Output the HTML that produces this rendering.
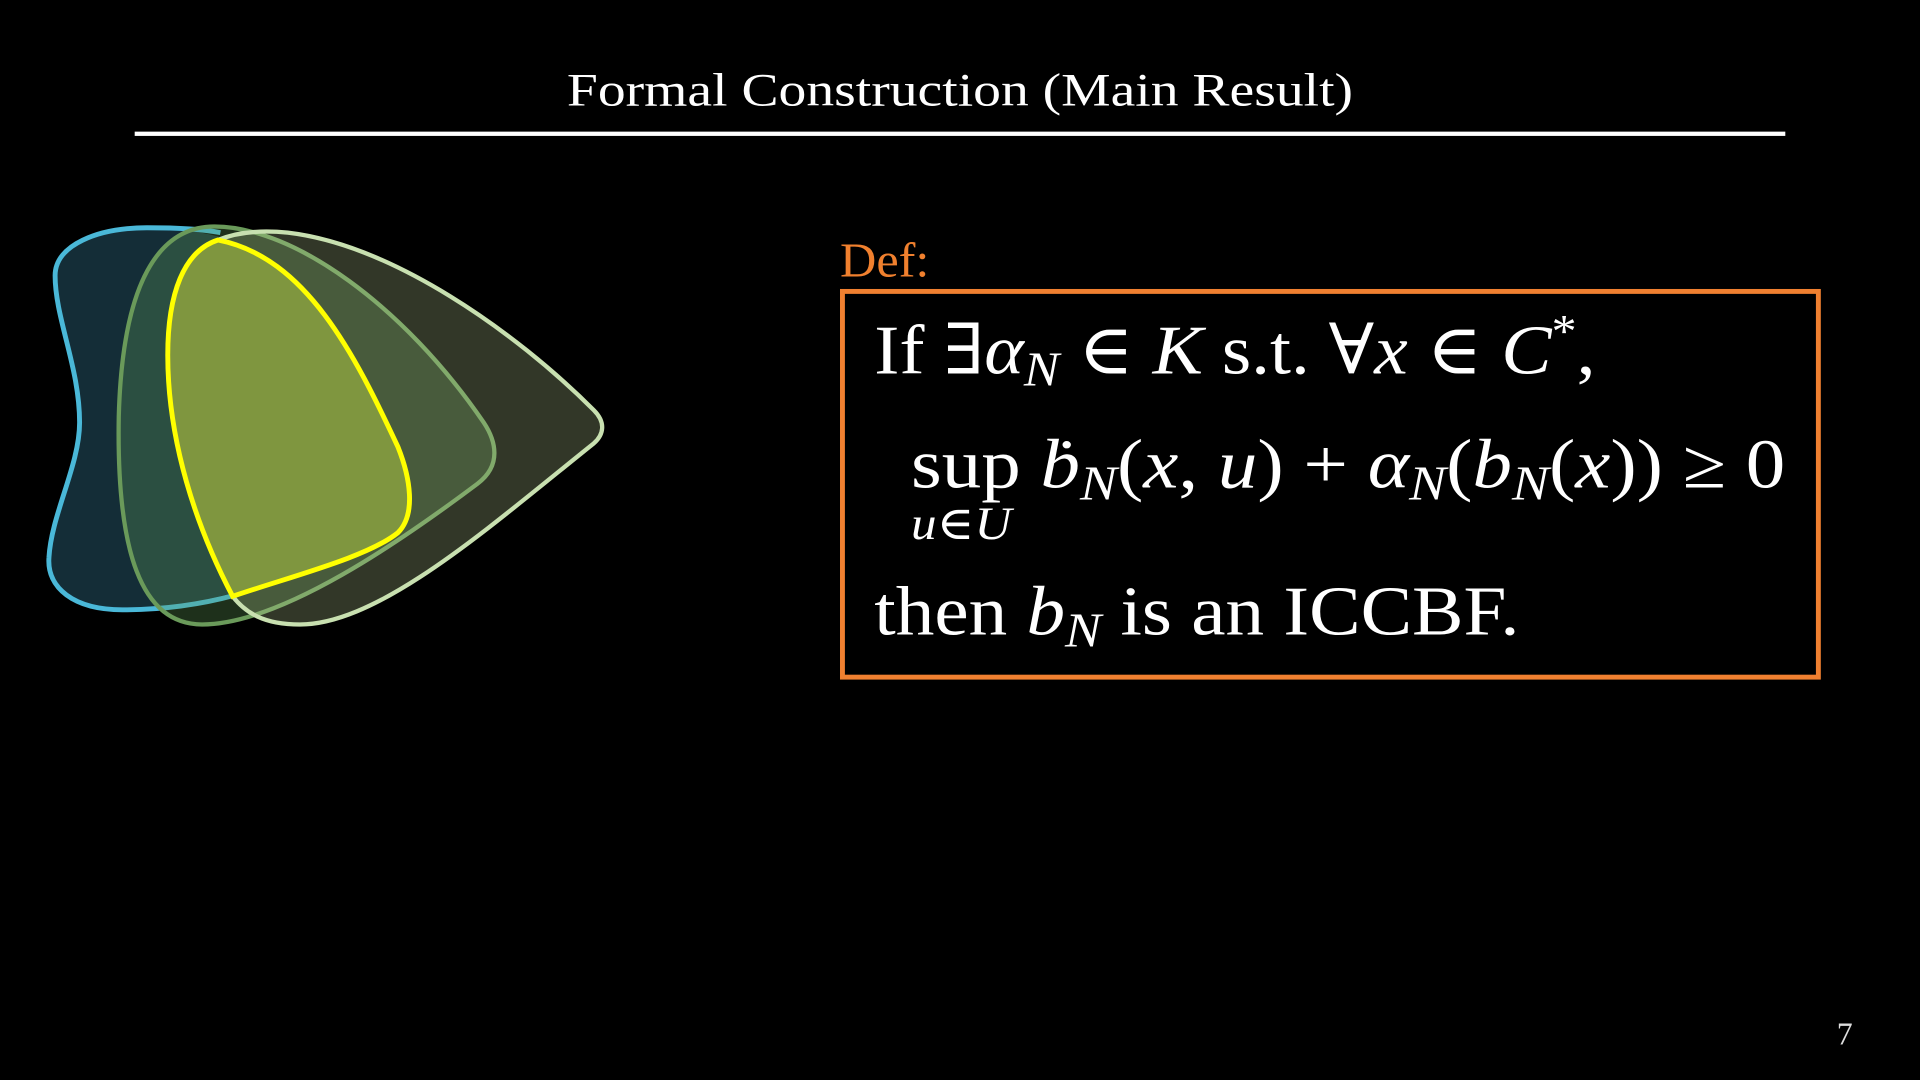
<!DOCTYPE html>
<html><head><meta charset="utf-8"><style>
html,body{margin:0;padding:0;background:#000;width:1920px;height:1080px;overflow:hidden}
svg{display:block}
text{font-family:"Liberation Serif","DejaVu Serif",serif;fill:#fff}
.i{font-style:italic}
</style></head><body>
<svg width="1920" height="1080" viewBox="0 0 1568 882" xmlns="http://www.w3.org/2000/svg">
<rect width="1568" height="882" fill="#000"/>
<text x="784" y="86" font-size="38" text-anchor="middle" textLength="642" lengthAdjust="spacingAndGlyphs">Formal Construction (Main Result)</text>
<rect x="110" y="107.5" width="1348" height="3.5" fill="#fff"/>

<path d="M120 186 C160 186 190 195 210 205 L230 470 C190 487 140 498 100 498 C60 498 38 480 40 455 C42 420 65 380 65 345 C65 300 45 260 45 225 C45 200 80 186 120 186 Z" fill="rgba(80,180,220,0.25)"/>
<path d="M180 190 C165 187 140 186 120 186 C80 186 45 200 45 225 C45 260 65 300 65 345 C65 380 42 420 40 455 C38 480 60 498 100 498 C140 498 170 492 192 486" fill="none" stroke="#4ab8d8" stroke-width="4"/>
<path d="M175 185 C130 185 100 230 97 340 C95 450 115 510 165 510 C230 510 330 440 390 395 C410 380 405 360 395 345 C330 250 240 185 175 185 Z" fill="rgba(100,160,90,0.3)" stroke="#6a9a5a" stroke-width="3.5"/>
<path d="M178 196 C195 189 215 188 235 190 C320 200 420 270 485 335 C495 345 493 355 485 362 C400 430 310 510 245 510 C215 510 200 500 190 487 Z" fill="rgba(200,220,160,0.25)" stroke="#c8e0b0" stroke-width="3.5"/>
<path d="M178 196 C150 205 137 240 137 290 C137 360 160 430 190 487 C240 470 300 455 325 435 C340 420 335 390 325 365 C290 290 250 210 178 196 Z" fill="#7f963f" stroke="#ffff00" stroke-width="4"/>

<text x="686" y="226" font-size="40" style="fill:#f0802e" textLength="73" lengthAdjust="spacingAndGlyphs">Def:</text>
<rect x="688" y="238" width="797" height="315" fill="none" stroke="#f08030" stroke-width="4"/>

<text x="714" y="305" font-size="57" textLength="589" lengthAdjust="spacingAndGlyphs">If ∃<tspan class="i">α</tspan><tspan class="i" font-size="40" dy="10">N</tspan><tspan dy="-10"> ∈ </tspan><tspan class="i">K</tspan> s.t. ∀<tspan class="i">x</tspan> ∈ <tspan class="i">C</tspan><tspan font-size="38" dy="-22">*</tspan><tspan dy="22">,</tspan></text>

<text x="744" y="398" font-size="57" textLength="714" lengthAdjust="spacingAndGlyphs">sup <tspan class="i">ḃ</tspan><tspan class="i" font-size="40" dy="10">N</tspan><tspan dy="-10">(</tspan><tspan class="i">x</tspan>, <tspan class="i">u</tspan>) + <tspan class="i">α</tspan><tspan class="i" font-size="40" dy="10">N</tspan><tspan dy="-10">(</tspan><tspan class="i">b</tspan><tspan class="i" font-size="40" dy="10">N</tspan><tspan dy="-10">(</tspan><tspan class="i">x</tspan>)) ≥ 0</text>
<text x="744" y="440" font-size="38" textLength="82" lengthAdjust="spacingAndGlyphs"><tspan class="i">u</tspan>∈<tspan class="i">U</tspan></text>

<text x="714" y="518" font-size="57" textLength="527" lengthAdjust="spacingAndGlyphs">then <tspan class="i">b</tspan><tspan class="i" font-size="40" dy="10">N</tspan><tspan dy="-10"> is an ICCBF.</tspan></text>

<text x="1500" y="853" font-size="26" style="fill:#ddd">7</text>
</svg>
</body></html>
